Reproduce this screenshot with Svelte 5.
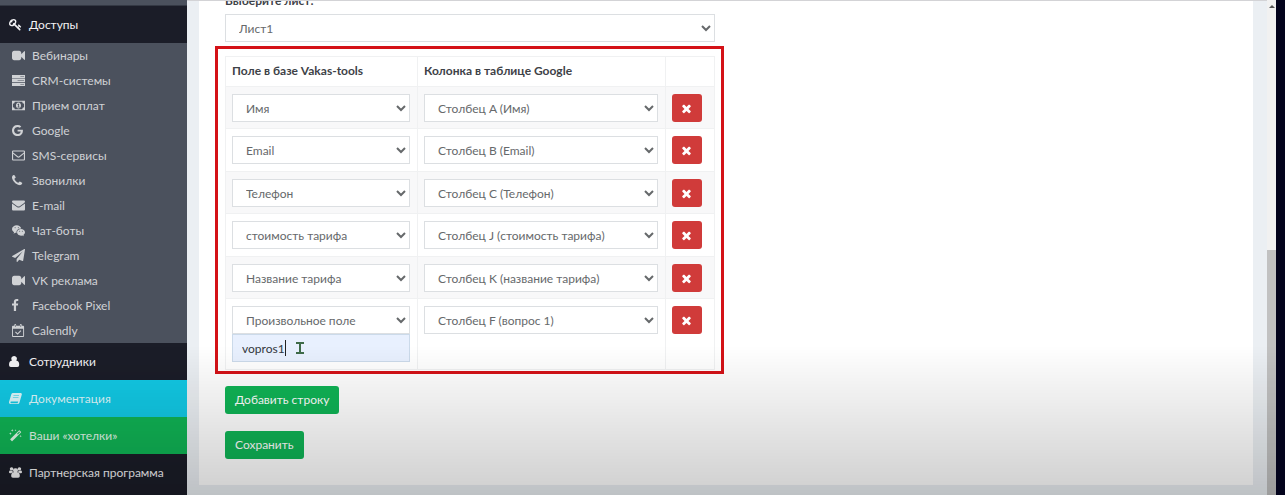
<script>
  const icons = {
    key: {
      d: 'M832 512q0-80-56-136t-136-56-136 56-56 136q0 42 19 83-41-19-83-19-80 0-136 56t-56 136 56 136 136 56 136-56 56-136q0-42-19-83 41 19 83 19 80 0 136-56t56-136zm851 704q0 17-49 66t-66 49q-9 0-28.5-16t-36.5-33-38.5-40-24.5-26l-96 96 220 220q28 28 28 68 0 42-39 81t-81 39q-40 0-68-28l-671-671q-176 131-365 131-163 0-265.5-102.5t-102.5-265.5q0-160 95-313t248-248 313-95q163 0 265.5 102.5t102.5 265.5q0 189-131 365l355 355 96-96q-3-3-26-24.5t-40-38.5-33-36.5-16-28.5q0-17 49-66t66-49q13 0 23 10 6 6 46 44.5t82 79.5 86.5 86 73 78 28.5 41z',
    },
    video: {
      d: 'M1792 352v1088q0 42-39 59-13 5-25 5-27 0-45-19l-403-403v166q0 119-84.5 203.5t-203.5 84.5h-704q-119 0-203.5-84.5t-84.5-203.5v-704q0-119 84.5-203.5t203.5-84.5h704q119 0 203.5 84.5t84.5 203.5v165l403-402q18-19 45-19 12 0 25 5 39 17 39 59z',
    },
    server: {
      box: '0 0 14 14',
      d: 'M0 1h14v3.500H0zM0 5.200h14v3.500H0zM0 9.400h14v3.500H0zM9 2.500v.5h4v-.5zM6 6.700v.5h7v-.5zM9 10.900v.5h4v-.5z',
    },
    money: {
      box: '0 0 14 14',
      d: 'M0 2h14v10H0zM3 3a2 2 0 0 1-2 2v4a2 2 0 0 1 2 2h8a2 2 0 0 1 2-2V5a2 2 0 0 1-2-2zM7 3.800c1.700 0 2.700 1.500 2.700 3.200S8.700 10.200 7 10.200 4.300 8.700 4.300 7 5.300 3.800 7 3.800zM5.800 5.800l.5.6.4-.3v2.200h-.8v.8h2.400v-.8h-.7V5h-.8z',
    },
    google: {
      box: '128 0 1792 1792',
      d: 'M896 786h725q12 67 12 128 0 217-91 387.500t-259.500 266.500-386.500 96q-157 0-299-60.500t-245-163.500-163.500-245-60.500-299 60.500-299 163.500-245 245-163.500 299-60.500q300 0 515 201l-209 201q-123-119-306-119-129 0-238.500 65t-173.500 176.500-64 243.500 64 243.500 173.500 176.500 238.500 65q87 0 160-24t120-60 82-82 51.500-87 22.500-78h-436v-264z',
    },
    envelopeOpen: {
      box: '0 0 14 14',
      d: 'M1.200 1.500h11.600A1.200 1.200 0 0 1 14 2.700v8.600a1.200 1.200 0 0 1-1.200 1.200H1.200A1.200 1.200 0 0 1 0 11.300V2.700a1.200 1.200 0 0 1 1.200-1.200zM1.200 5.200v6.100h11.600V5.200L8.300 9q-1.300 1-2.600 0zM1.200 2.700v1l5.100 4q.7.500 1.400 0l5.100-4v-1z',
    },
    phone: {
      box: '192 0 1792 1792',
      d: 'M1600 1240q0 27-10 70.5t-21 68.5q-21 50-122 106-94 51-186 51-27 0-53-3.5t-57.5-12.5-47-14.5-55.5-20.5-49-18q-98-35-175-83-127-79-264-216t-216-264q-48-77-83-175-3-9-18-49t-20.5-55.5-14.5-47-12.5-57.5-3.5-53q0-92 51-186 56-101 106-122 25-11 68.5-21t70.5-10q14 0 21 3 18 6 53 76 11 19 30 54t35 63.5 31 53.5q3 4 17.5 25t21.5 35.5 7 28.5q0 20-28.5 50t-62 55-62 53-28.5 46q0 9 5 22.5t8.5 20.5 14 24 11.5 19q76 137 174 235t235 174q2 1 19 11.5t24 14 20.5 8.5 22.5 5q18 0 46-28.5t53-62 55-62 50-28.5q14 0 28.5 7t35.5 21.5 25 17.5q25 15 53.5 31t63.5 35 54 30q70 35 76 53 3 7 3 21z',
    },
    envelope: {
      box: '0 0 14 14',
      d: 'M1.200 1.500h11.600A1.200 1.200 0 0 1 14 2.700q0 .8-.9 1.500L8.300 7.700q-1.300.9-2.600 0L.9 4.200Q0 3.500 0 2.700a1.200 1.200 0 0 1 1.200-1.200zM0 4.900l5.300 3.800q1.700 1.100 3.400 0L14 4.900v6.400a1.200 1.200 0 0 1-1.200 1.200H1.200A1.200 1.200 0 0 1 0 11.300z',
    },
    chat: {
      box: '0 0 15 14',
      d: 'M5.500 1C8 1 10.200 2.500 10.700 4.700 7.600 4.600 5.100 6.500 5.100 9l.1.900-1.400-.2-2 1 .6-1.700C.9 8 0 6.800 0 5.400 0 3 2.500 1 5.500 1zM3.600 3.200a.6.600 0 1 0 .01 0zM7.300 3.200a.6.600 0 1 0 .01 0zM10.400 5.300c2.500 0 4.600 1.700 4.600 3.800 0 1.200-.8 2.300-1.800 3l.4 1.400-1.600-.8-1.600.3c-2.500 0-4.600-1.700-4.600-3.900s2.100-3.800 4.600-3.800zM8.900 7.300a.5.500 0 1 0 .01 0zM11.900 7.300a.5.500 0 1 0 .01 0z',
    },
    plane: {
      d: 'M1764 11q33 24 27 64l-256 1536q-5 29-32 45-14 8-31 8-11 0-24-5l-453-185-242 295q-18 23-49 23-13 0-22-4-19-7-30.5-23.5t-11.5-36.5v-349l864-1059-1069 925-395-162q-37-14-40-55-2-40 32-59l1664-960q15-9 32-9 20 0 36 11z',
    },
    facebook: {
      box: '479 0 1792 1792',
      d: 'M1343 12v264h-157q-86 0-116 36t-30 108v189h293l-39 296h-254v759h-306v-759h-255v-296h255v-218q0-186 104-288.5t277-102.5q147 0 228 12z',
    },
    calendar: {
      box: '0 0 14 14',
      d: 'M1 2h1.500V1q0-1 1-1t1 1v1h4V1q0-1 1-1t1 1v1H12a1 1 0 0 1 1 1v10a1 1 0 0 1-1 1H1a1 1 0 0 1-1-1V3a1 1 0 0 1 1-1zM1 5v8h11V5zM3.200 1v2.200h.6V1zM9.200 1v2.200h.6V1zM3.300 9l.8-.8L6 10l3.200-3.200.8.8-4 4z',
    },
    user: {
      box: '0 0 14 14',
      d: 'M5.500 1a3 3 0 0 1 2.300 5q3.200.3 3.200 4.800 0 2.200-2 2.200H2q-2 0-2-2.200Q0 6.300 3.200 6a3 3 0 0 1 2.300-5z',
    },
    book: {
      box: '0 0 14 14',
      d: 'M4.300 1h8.500q1.400.4 1 1.800l-2.500 8.400q-.4 1.800-2 1.800H2Q-.2 13 0 10.800L2.500 2.500Q3 1 4.300 1zM4.900 3.700l-.2.700h6l.2-.7zM4.300 5.800l-.2.700h6l.2-.7zM2 10.200q-1 1.500.4 1.800h6.900l.6-1.800z',
    },
    magic: {
      box: '0 0 14 14',
      d: 'M11.500 1.500l1.400 1.400q.4.400 0 .8L3.700 12.900q-.4.400-.8 0l-1.400-1.400q-.4-.4 0-.8l9.200-9.200q.4-.4.800 0zM11 2.700L8.700 5l.8.800 2.300-2.300zM3.500 0l.4 1.100L5 1.500l-1.100.4-.4 1.100-.4-1.100L2 1.500l1.100-.4zM7 .2l.3.800.8.300-.8.300-.3.800-.3-.8-.8-.3.800-.3zM1.500 3.500l.4 1.100 1.100.4-1.100.4-.4 1.100-.4-1.100L0 5l1.100-.4zM12.500 6.500l.3.900.9.300-.9.300-.3.900-.3-.9-.9-.3.900-.3z',
    },
    users: {
      box: '0 0 15 14',
      d: 'M3 .8a2 2 0 1 1-.01 0zM12 .8a2 2 0 1 1-.01 0zM7.500 2a2.700 2.700 0 0 1 2 4.600q3 .2 3 4.400 0 2-2 2h-6q-2 0-2-2 0-4.200 3-4.400a2.700 2.700 0 0 1 2-4.600zM1 4.800q2 .8 3.200.2-.2 1 .3 1.700-1.500.3-2 1.300H1.300Q0 8 0 6.700 0 4.800 1 4.800zM14 4.800q1 0 1 1.900Q15 8 13.700 8h-1.200q-.5-1-2-1.300.5-.7.3-1.700 1.200.6 3.200-.2z',
    },
    times: {
      d: 'M1490 1322q0 40-28 68l-136 136q-28 28-68 28t-68-28l-294-294-294 294q-28 28-68 28t-68-28l-136-136q-28-28-28-68t28-68l294-294-294-294q-28-28-28-68t28-68l136-136q28-28 68-28t68 28l294 294 294-294q28-28 68-28t68 28l136 136q28 28 28 68t-28 68l-294 294 294 294q28 28 28 68z',
    },
  };

  const services = [
    { icon: 'video', label: 'Вебинары' },
    { icon: 'server', label: 'CRM-системы' },
    { icon: 'money', label: 'Прием оплат' },
    { icon: 'google', label: 'Google' },
    { icon: 'envelopeOpen', label: 'SMS-сервисы' },
    { icon: 'phone', label: 'Звонилки' },
    { icon: 'envelope', label: 'E-mail' },
    { icon: 'chat', label: 'Чат-боты' },
    { icon: 'plane', label: 'Telegram' },
    { icon: 'video', label: 'VK реклама' },
    { icon: 'facebook', label: 'Facebook Pixel' },
    { icon: 'calendar', label: 'Calendly' },
  ];

  const sections = [
    { icon: 'user', label: 'Сотрудники', tone: 'dark' },
    { icon: 'book', label: 'Документация', tone: 'info' },
    { icon: 'magic', label: 'Ваши «хотелки»', tone: 'success' },
    { icon: 'users', label: 'Партнерская программа', tone: 'dark' },
  ];

  let rows = $state([
    { field: 'Имя', column: 'Столбец A (Имя)' },
    { field: 'Email', column: 'Столбец B (Email)' },
    { field: 'Телефон', column: 'Столбец C (Телефон)' },
    { field: 'стоимость тарифа', column: 'Столбец J (стоимость тарифа)' },
    { field: 'Название тарифа', column: 'Столбец K (название тарифа)' },
    { field: 'Произвольное поле', column: 'Столбец F (вопрос 1)', custom: 'vopros1' },
  ]);

  const fields = rows.map((row) => row.field);
  const columns = rows.map((row) => row.column);

  function addRow() {
    rows.push({ field: fields[0], column: columns[0] });
  }
</script>

{#snippet icon(name)}
  <svg class="icon" viewBox={icons[name].box ?? '0 0 1792 1792'} aria-hidden="true">
    <path d={icons[name].d} fill-rule="evenodd" />
  </svg>
{/snippet}

<div class="page">
  <nav class="sidebar">
    <div class="submenu-end"></div>
    <a class="section dark" href="#access">{@render icon('key')}Доступы</a>
    <ul class="submenu">
      {#each services as item}
        <li><a href="#service">{@render icon(item.icon)}{item.label}</a></li>
      {/each}
    </ul>
    {#each sections as item}
      <a class="section {item.tone}" href="#section">{@render icon(item.icon)}{item.label}</a>
    {/each}
  </nav>

  <main>
    <div class="card">
      <form onsubmit={(e) => e.preventDefault()}>
        <label class="sheet-label" for="sheet">Выберите лист:</label>
        <select id="sheet"><option>Лист1</option></select>

        <div class="highlight">
          <table>
            <thead>
              <tr>
                <th class="field">Поле в базе Vakas-tools</th>
                <th>Колонка в таблице Google</th>
                <th class="action"></th>
              </tr>
            </thead>
            <tbody>
              {#each rows as row, i}
                <tr>
                  <td>
                    <select bind:value={row.field} aria-label="Поле">
                      {#each fields as name}<option>{name}</option>{/each}
                    </select>
                    {#if row.custom !== undefined}
                      <div class="custom">
                        <input type="text" bind:value={row.custom} aria-label="Произвольное поле" />
                        <span class="caret"></span>
                        <svg class="pointer" viewBox="0 0 10 14" aria-hidden="true">
                          <path d="M1 1h8v2H6v8h3v2H1v-2h3V3H1z" />
                        </svg>
                      </div>
                    {/if}
                  </td>
                  <td>
                    <select bind:value={row.column} aria-label="Колонка">
                      {#each columns as name}<option>{name}</option>{/each}
                    </select>
                  </td>
                  <td>
                    <button class="remove" type="button" aria-label="Удалить" onclick={() => rows.splice(i, 1)}>
                      {@render icon('times')}
                    </button>
                  </td>
                </tr>
              {/each}
            </tbody>
          </table>
        </div>

        <div class="buttons">
          <button class="green" type="button" onclick={addRow}>Добавить строку</button>
          <button class="green" type="submit">Сохранить</button>
        </div>
      </form>
    </div>
  </main>

  <div class="scrollbar">
    <span class="arrow"></span>
    <div class="thumb"></div>
  </div>
  <div class="shade"></div>
</div>

<style>
  :global(body) {
    overflow: hidden;
    color: #3e4247;
    font-family: Lato, 'Open Sans', sans-serif;
    font-size: 12px;
    line-height: 20px;
  }

  * {
    box-sizing: border-box;
  }

  .page {
    display: flex;
    height: 100vh;
    overflow: hidden;
    border-right: 9px solid #03031c;
  }

  .icon {
    flex: none;
    width: 13px;
    height: 13px;
    fill: currentColor;
  }

  .sidebar {
    flex: none;
    width: 187px;
    background: #1b1d28;
  }

  .sidebar a {
    display: flex;
    align-items: center;
    gap: 7px;
    text-decoration: none;
  }

  .submenu-end {
    height: 6px;
    border-bottom: 1px solid #343944;
    background: #4b515d;
  }

  .section {
    height: 37px;
    padding-left: 9px;
    color: #f2f2f4;
  }

  .section.info {
    background: #12c9e5;
    color: #dcf8fc;
  }

  .section.success {
    background: #10b455;
    color: #e0f7e8;
  }

  .submenu {
    margin: 0;
    padding: 0;
    background: #4b515d;
    list-style: none;
  }

  .submenu a {
    height: 25px;
    padding-left: 12px;
    color: #d0d2d5;
  }

  main {
    flex: 1;
    min-width: 0;
    padding: 0 14px 10px 12px;
    border-top: 1px solid #d3d3d6;
    background: #ebeff3;
  }

  .card {
    height: 100%;
    padding: 0 12px 0 13px;
    overflow: hidden;
    background: #fff;
  }

  form {
    width: 50%;
    padding: 0 12px 0 13px;
  }

  .sheet-label {
    display: block;
    margin-top: -10px;
    height: 23px;
    font-weight: 700;
  }

  select,
  input {
    display: block;
    width: 100%;
    height: 28px;
    border: 1px solid #dcdfe2;
    border-radius: 0;
    background: #fff;
    color: #66696b;
    font: inherit;
  }

  select {
    padding: 0 0 0 9px;
  }

  .highlight {
    margin: 4px -9px 12px -10px;
    padding: 7px 6px 1px 7px;
    border: 3px solid #d41217;
  }

  table {
    width: 100%;
    border-right: 1px solid #f0f1f2;
    border-bottom: 1px solid #f0f1f2;
    border-spacing: 0;
    table-layout: fixed;
  }

  th,
  td {
    padding: 7px 7px 6px 6px;
    border-top: 1px solid #f0f1f2;
    border-left: 1px solid #f0f1f2;
    text-align: left;
    vertical-align: top;
  }

  th {
    height: 30px;
    padding: 4px 6px;
    font-weight: 700;
  }

  .field {
    width: 192px;
  }

  .action {
    width: 49px;
  }

  tbody tr:nth-child(odd) {
    background: #f8f8f9;
  }

  tbody tr:nth-child(even) td {
    padding-bottom: 7px;
  }

  .custom {
    position: relative;
  }

  .custom input {
    padding: 0 9px;
    border-color: #cbdaea;
    background: #e8f0fe;
    color: #33373d;
  }

  .caret {
    position: absolute;
    top: 6px;
    left: 53px;
    width: 1px;
    height: 16px;
    background: #222;
  }

  .pointer {
    position: absolute;
    top: 7px;
    left: 63px;
    width: 10px;
    height: 14px;
    fill: #3f6b49;
  }

  button {
    display: flex;
    align-items: center;
    justify-content: center;
    height: 28px;
    border: 0;
    border-radius: 3px;
    color: #fff;
    font: inherit;
  }

  .remove {
    width: 30px;
    padding: 0;
    background: #d03b3a;
  }

  .buttons {
    display: flex;
    flex-direction: column;
    align-items: flex-start;
    gap: 17px;
  }

  .green {
    padding: 0 10px;
    background: #10b456;
  }

  .scrollbar {
    display: flex;
    flex: none;
    flex-direction: column;
    justify-content: space-between;
    align-items: center;
    width: 9px;
    padding-top: 5px;
    background: #f1f1f1;
  }

  .arrow {
    border: 3px solid transparent;
    border-top: 0;
    border-bottom-color: #555;
  }

  .thumb {
    width: 100%;
    height: 50%;
    background: #c1c1c1;
  }

  .shade {
    position: fixed;
    right: 9px;
    bottom: 0;
    left: 0;
    height: 150px;
    background: linear-gradient(rgb(0 0 0 / 0), rgb(0 0 0 / 0.19));
    pointer-events: none;
  }
</style>
